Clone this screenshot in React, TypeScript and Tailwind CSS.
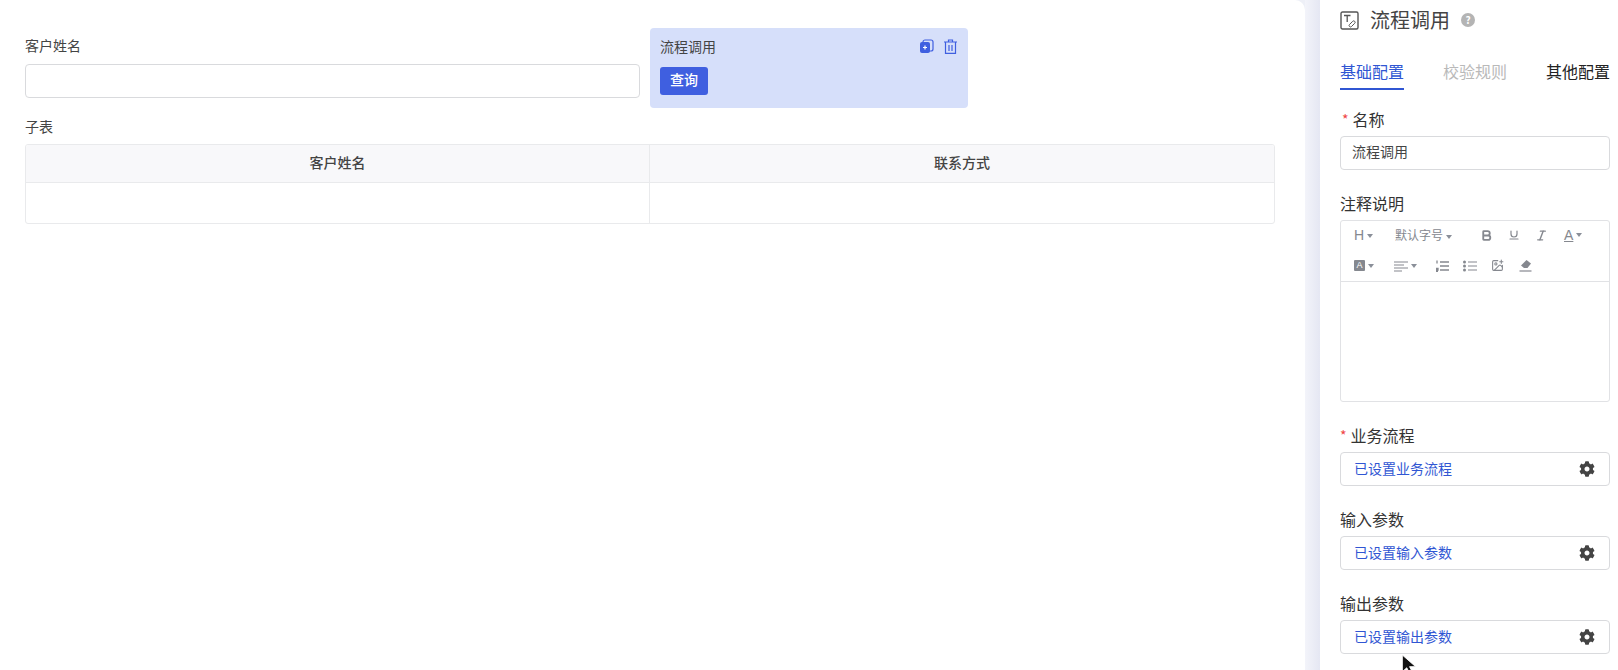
import { Bold, ImagePlus, Italic, Underline } from 'lucide-react';
import { FaCog } from 'react-icons/fa';

const font = { fontFamily: '"Noto Sans CJK SC", "Noto Sans", sans-serif' };
const latin = { fontFamily: '"Liberation Sans", sans-serif' };

function Caret() {
  return <span className="ml-[3px] inline-block h-0 w-0 border-x-[3px] border-t-[4px] border-x-transparent border-t-[#8a8f99] align-middle" />;
}

// box with a blue link and a gear on the right
function SettingRow({ label, value, required }: { label: string; value: string; required?: boolean }) {
  return (
    <div className="mt-[21px]">
      <div className="flex h-[24px] items-center text-[16px] leading-[24px] text-[#333]">
        {required && <span className="mr-[4px] text-[14px] text-[#ef4444]">*</span>}
        {label}
      </div>
      <div className="mt-[5px] flex h-[34px] items-center justify-between rounded-[4px] border border-[#d9dadd] pl-[13px] pr-[14px]">
        <span className="pb-[3px] text-[14px] leading-[20px] text-[#3056d3]">{value}</span>
        <FaCog size={16} className="text-[#444]" />
      </div>
    </div>
  );
}

export default function App() {
  return (
    <div style={font} className="relative flex h-[670px] w-[1618px] overflow-hidden bg-white">
      <div className="flex h-full w-[1320px] bg-[#eef0f7]">
        {/* left canvas */}
        <div className="h-full w-[1305px] rounded-tr-[10px] bg-white pl-[25px] pr-[30px] pt-[28px]">
          <div className="flex gap-[10px]">
            <div className="w-[615px]">
              <div className="mt-[7px] h-[20px] text-[14px] leading-[20px] text-[#444]">客户姓名</div>
              <div className="mt-[9px] h-[34px] rounded-[4px] border border-[#d9dadd]" />
            </div>
            <div className="h-[80px] w-[318px] rounded-[4px] bg-[#d6dffa] px-[10px] pt-[8px]">
              <div className="flex h-[20px] items-center justify-between">
                <span className="pb-[1px] text-[14px] leading-[20px] text-[#444]">流程调用</span>
                <div className="flex items-center gap-[10px] pr-[1px]">
                  <svg width="15" height="15" viewBox="0 0 15 15">
                    <rect x="4" y="1" width="10" height="11" rx="2" fill="none" stroke="#3f5fe0" strokeWidth="1.2" />
                    <rect x="1" y="3" width="10" height="11" rx="2" fill="#3f5fe0" />
                    <path d="M6 6.5v4M4 8.5h4" stroke="#fff" strokeWidth="1.2" />
                  </svg>
                  <svg width="13" height="15" viewBox="0 0 13 15" fill="none" stroke="#3f5fe0" strokeWidth="1.2">
                    <path d="M0 3h13M4.5 3V1h4v2M1.5 3v11.4h10V3M5 6v6M8 6v6" />
                  </svg>
                </div>
              </div>
              <div className="mt-[11px] flex h-[28px] w-[48px] items-center justify-center rounded-[3px] bg-[#3f5fe0] pb-[3px] text-[14px] font-medium text-white">查询</div>
            </div>
          </div>
          <div className="mt-[8px] h-[20px] text-[14px] leading-[20px] text-[#444]">子表</div>
          <div className="mt-[8px] w-[1250px] overflow-hidden rounded-[3px] border border-[#e9eaec]">
            <div className="grid h-[38px] grid-cols-[624px_1fr] border-b border-[#e9eaec] bg-[#f8f8fa] pb-0 text-[14px] font-medium text-[#444]">
              <div className="flex items-center justify-center border-r border-[#e9eaec] pb-[2px]">客户姓名</div>
              <div className="flex items-center justify-center pb-[2px]">联系方式</div>
            </div>
            <div className="grid h-[40px] grid-cols-[624px_1fr]">
              <div className="border-r border-[#e9eaec]" />
              <div />
            </div>
          </div>
        </div>

        {/* gutter */}
        <div className="h-full w-[15px] bg-gradient-to-r from-[#f3f4fa] to-[#e5e7f3]" />
      </div>

      {/* config panel */}
      <div className="h-full w-[298px] pl-[20px] pr-[8px]">
        <div className="flex h-[40px] items-center">
          <svg width="19" height="19" viewBox="0 0 19 19" fill="none" stroke="#555">
            <rect x="1" y="1" width="17" height="17" rx="1.5" strokeWidth="1.4" />
            <path d="M4 4.5h6.5M7.2 4.5v6.5" strokeWidth="1.3" />
            <path d="M9.5 13.5l3.2-3.2a1.3 1.3 0 0 1 2 2l-3.2 3.2a1.3 1.3 0 0 1-2-2z" strokeWidth="1" />
          </svg>
          <span className="ml-[11px] text-[20px] leading-[28px] text-[#444]">流程调用</span>
          <span className="ml-[11px] flex h-[14px] w-[14px] items-center justify-center rounded-full bg-[#b4b4b4] text-[10px] font-bold leading-none text-white">?</span>
        </div>
        <div className="mt-[19px] flex justify-between text-[16px] leading-[24px]">
          <div className="h-[31px] border-b-2 border-[#3056d3] text-[#3056d3]">基础配置</div>
          <div className="text-[#b9b9b9]">校验规则</div>
          <div className="text-[#222]">其他配置</div>
        </div>
        <div className="mt-[17px] flex h-[24px] items-center text-[16px] leading-[24px] text-[#333]">
          <span className="ml-[2px] mr-[4px] text-[14px] text-[#ef4444]">*</span>
          名称
        </div>
        <div className="mt-[5px] flex h-[34px] items-center rounded-[4px] border border-[#d9dadd] pb-[3px] pl-[11px] text-[14px] text-[#444]">流程调用</div>

        <div className="mt-[21px] h-[24px] text-[16px] leading-[24px] text-[#333]">注释说明</div>
        <div className="mt-[5px] h-[182px] rounded-[3px] border border-[#e1e2e5]">
          <div className="h-[61px] border-b border-[#e1e2e5] pl-[13px] text-[12px] leading-none text-[#85888f]">
            <div className="flex h-[28px] items-center">
              <span className="w-[41px] text-[14px]" style={latin}>H<Caret /></span>
              <span className="w-[85px]">默认字号<Caret /></span>
              <Bold size={13} strokeWidth={3.4} />
              <Underline size={12} strokeWidth={2.4} className="ml-[15px]" />
              <Italic size={13} strokeWidth={2.6} className="ml-[15px]" />
              <span className="ml-[16px] text-[14px] underline" style={latin}>A</span>
              <Caret />
            </div>
            <div className="flex h-[33px] items-center">
              <span className="flex h-[11px] w-[11px] items-center justify-center rounded-[1px] bg-[#85888f] text-[9px] text-white" style={latin}>A</span>
              <Caret />
              <svg className="ml-[20px]" width="14" height="12" viewBox="0 0 14 12" stroke="#85888f" strokeWidth="1.2">
                <path d="M0 2h14M0 5h10M0 8h14M0 11h8" />
              </svg>
              <Caret />
              <svg className="ml-[19px]" width="13" height="12" viewBox="0 0 13 12" stroke="#85888f" strokeWidth="1.3">
                <path d="M4 2h9M4 6h9M4 10h9M1 0.5v3M0 8.5h2v1.5h-2v1.5h2" fill="none" />
              </svg>
              <svg className="ml-[14px]" width="14" height="12" viewBox="0 0 14 12" fill="#85888f">
                <circle cx="1.5" cy="2" r="1.5" /><circle cx="1.5" cy="6" r="1.5" /><circle cx="1.5" cy="10" r="1.5" />
                <path d="M5 1.4h9v1.2h-9zM5 5.4h9v1.2h-9zM5 9.4h9v1.2h-9z" />
              </svg>
              <ImagePlus size={13} strokeWidth={2} className="ml-[14px]" />
              <svg className="ml-[15px]" width="13" height="13" viewBox="0 0 13 13">
                <path d="M7.5 1l4.5 3.5-3.5 4.5h-3.5l-3-2.5z" fill="#85888f" />
                <path d="M0.5 12h12" stroke="#85888f" strokeWidth="1.2" />
              </svg>
            </div>
          </div>
        </div>

        <div className="mt-[11px]">
          <SettingRow label="业务流程" value="已设置业务流程" required />
        </div>
        <SettingRow label="输入参数" value="已设置输入参数" />
        <SettingRow label="输出参数" value="已设置输出参数" />
      </div>

      {/* mouse pointer */}
      <svg className="absolute left-[1401px] top-[655px]" width="16" height="20" viewBox="0 0 14 18">
        <path d="M1 0v15l4-3.5 3 6 2.5-1.2-3-5.8h5.5z" fill="#111" stroke="#fff" strokeWidth="0.8" />
      </svg>
    </div>
  );
}
